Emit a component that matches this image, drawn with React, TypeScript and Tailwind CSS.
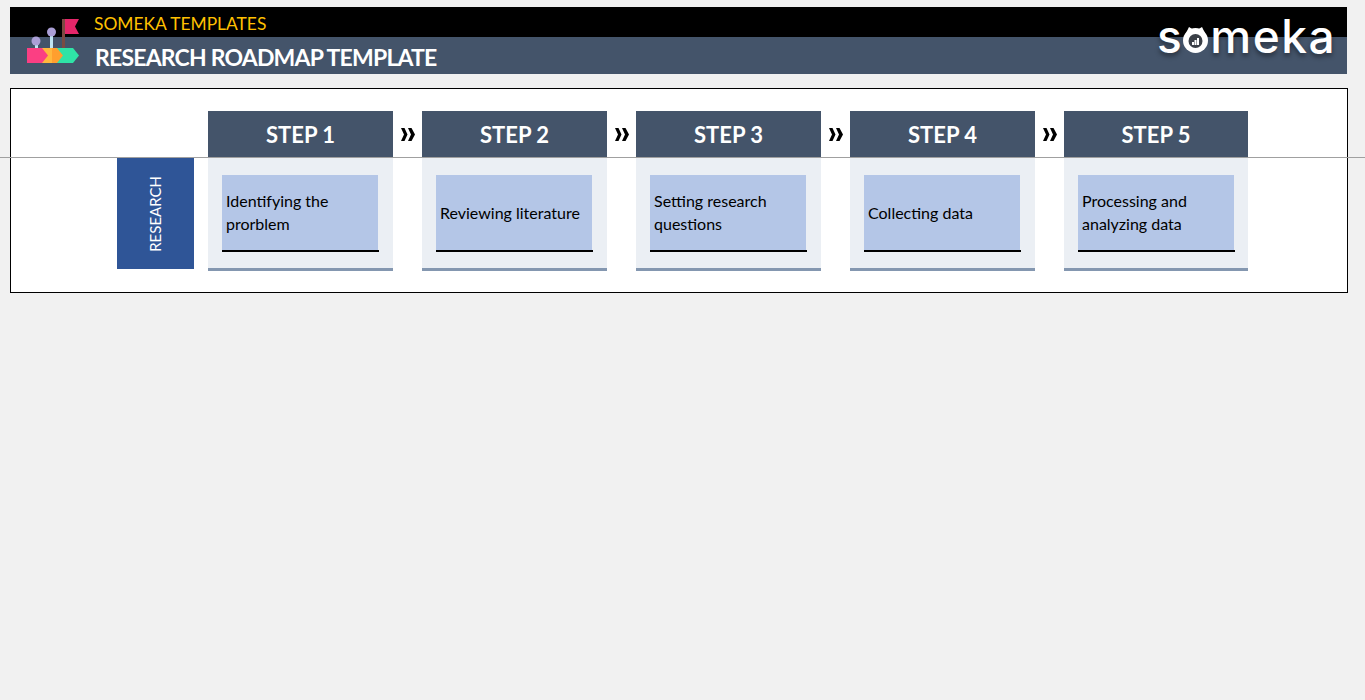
import React from 'react';

const steps = [
  { title: 'STEP 1', text: 'Identifying the prorblem', width: 'w-[185px]' },
  { title: 'STEP 2', text: 'Reviewing literature', width: 'w-[185px]' },
  { title: 'STEP 3', text: 'Setting research questions', width: 'w-[185px]' },
  { title: 'STEP 4', text: 'Collecting data', width: 'w-[185px]' },
  { title: 'STEP 5', text: 'Processing and analyzing data', width: 'w-[184px]' },
];

function RoadmapIcon() {
  return (
    <svg width="54" height="48" viewBox="0 0 54 48" className="shrink-0">
      <rect x="35" y="1" width="3" height="30" fill="#7b4a42" />
      <path d="M38 1h14l-4 7.500 4 7.500H38z" fill="#e5266a" />
      <rect x="23" y="14" width="3" height="16" fill="#bfe6f2" />
      <circle cx="24.500" cy="14" r="4.500" fill="#ab9fd6" />
      <rect x="8" y="24" width="3" height="6" fill="#bfe6f2" />
      <circle cx="9" cy="23" r="4.500" fill="#ab9fd6" />
      <path d="M28 30h18l6 7.500-6 7.500H28z" fill="#2fe3a6" />
      <path d="M13 30h17l6 7.500-6 7.500H13z" fill="#ff9f2e" />
      <path d="M13 30h12v15H13z" fill="#ffb83d" />
      <path d="M0 30h15l6 7.500-6 7.500H0z" fill="#fb3f83" />
    </svg>
  );
}

function SomekaLogo() {
  return (
    <div className="flex items-center text-white font-['Inter',sans-serif] text-[46px] leading-none font-medium tracking-[1.5px] [text-shadow:0_3px_5px_rgba(0,0,0,0.45)]">
      <span>s</span>
      <svg width="25" height="28" viewBox="0 0 25 28" className="mt-[5px] shrink-0">
        <circle cx="12.500" cy="15.500" r="12.500" fill="#fff" />
        <path d="M3 8l3-6 5 3z M22 8l-3-6-5 3z" fill="#fff" />
        <circle cx="12.500" cy="16" r="7" fill="#3a3f47" />
        <rect x="9" y="17" width="2" height="3" fill="#fff" />
        <rect x="11.500" y="15" width="2" height="5" fill="#fff" />
        <rect x="14" y="13" width="2" height="7" fill="#fff" />
      </svg>
      <span className="ml-[2px]">meka</span>
    </div>
  );
}

function Chevrons() {
  return (
    <div className="w-[29px] h-[46px] flex items-center justify-center">
      <svg width="15" height="13" viewBox="0 0 15 13">
        <path d="M1 0h3.500l3 6.500-3 6.500H1l3-6.500z" fill="#000" />
        <path d="M8 0h3.500L15 6.500 11.500 13H8l3-6.500z" fill="#000" />
      </svg>
    </div>
  );
}

function StepColumn({ title, text, width }: { title: string; text: string; width: string }) {
  return (
    <div className={`${width} shrink-0`}>
      <div className="h-[46px] bg-[#44546a] flex items-center justify-center text-white text-[22px] font-bold">
        {title}
      </div>
      <div className="h-[113px] mt-px bg-[#ebeff4] border-b-[3px] border-[#8497b0] pl-[14px] pt-[17px]">
        <div className="w-[157px] h-[77px] border-b-2 border-black">
          <div className="w-[156px] h-[75px] bg-[#b4c6e7] flex items-center px-1 pb-px text-black text-base leading-[23px]">
            <span>{text}</span>
          </div>
        </div>
      </div>
    </div>
  );
}

export default function App() {
  return (
    <div className="relative min-h-[700px] bg-[#f1f1f1] pt-[7px] px-[10px] font-['Lato','Open_Sans',sans-serif]">
      <header className="relative w-[1337px] h-[67px] bg-[#44546a] overflow-hidden">
        <div className="h-[30px] bg-black" />
        <div className="absolute left-[17px] top-[11px]">
          <RoadmapIcon />
        </div>
        <div className="absolute left-[84px] top-[6px] text-[#ffc000] text-[17.400px] leading-[22px]">SOMEKA TEMPLATES</div>
        <div className="absolute left-[85px] top-[36px] text-white text-[23px] tracking-[-0.8px] leading-[28px] font-bold">
          RESEARCH ROADMAP TEMPLATE
        </div>
        <div className="absolute right-[11px] top-[6px]">
          <SomekaLogo />
        </div>
      </header>

      <main className="mt-[14px] w-[1338px] h-[205px] bg-white border border-black pt-[22px] pl-[106px] flex items-start">
        <div className="w-[77px] h-[111px] mt-[47px] mr-[14px] bg-[#2f5597] flex items-center justify-center">
          <span className="[writing-mode:vertical-rl] rotate-180 text-white text-[15px] leading-none">RESEARCH</span>
        </div>
        {steps.map((step, i) => (
          <React.Fragment key={step.title}>
            <StepColumn title={step.title} text={step.text} width={step.width} />
            {i < steps.length - 1 && <Chevrons />}
          </React.Fragment>
        ))}
      </main>

      {/* freeze pane line */}
      <div className="absolute left-0 right-0 top-[157px] h-px bg-[#a0a0a0]" />
    </div>
  );
}
